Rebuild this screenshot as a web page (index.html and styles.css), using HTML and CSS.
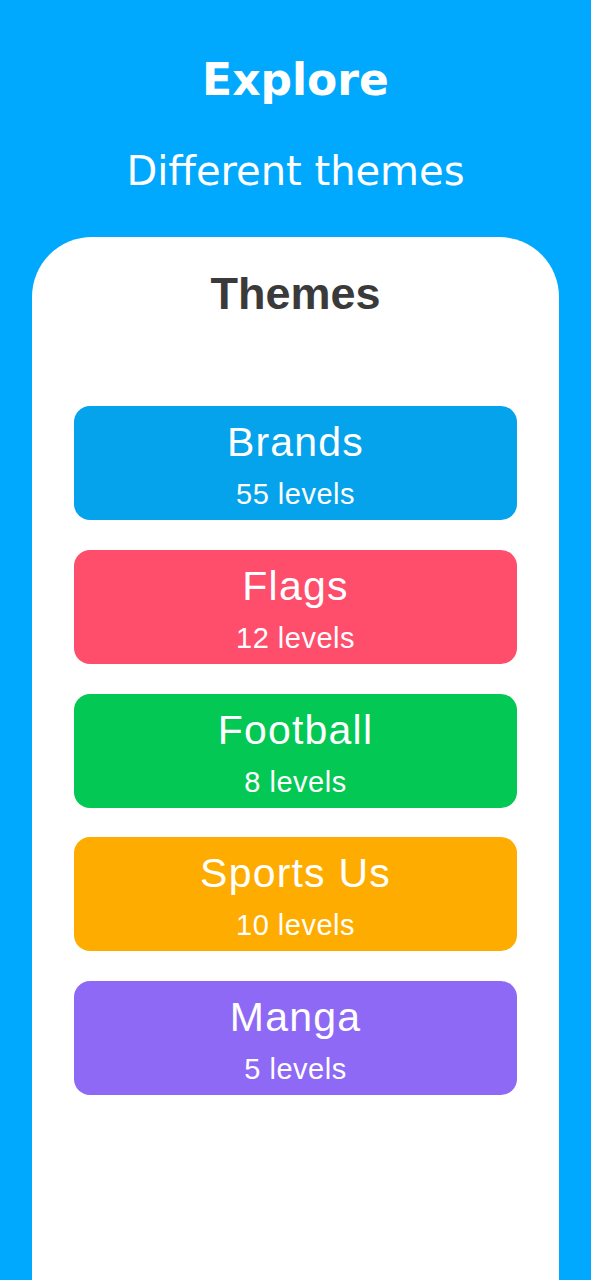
FILE: index.html
```html
<!DOCTYPE html>
<html lang="en">
<head>
<meta charset="utf-8">
<title>Explore themes</title>
<link rel="stylesheet" href="styles.css">
</head>
<body>
<div class="screen">
  <header class="hero">
    <h1 class="hero-title">Explore</h1>
    <p class="hero-sub">Different themes</p>
  </header>
  <main class="card">
    <h2 class="card-title">Themes</h2>
    <ul class="theme-list">
      <li class="theme theme-brands"><span class="theme-name">Brands</span><span class="theme-levels">55 levels</span></li>
      <li class="theme theme-flags"><span class="theme-name">Flags</span><span class="theme-levels">12 levels</span></li>
      <li class="theme theme-football"><span class="theme-name">Football</span><span class="theme-levels">8 levels</span></li>
      <li class="theme theme-sports"><span class="theme-name">Sports Us</span><span class="theme-levels">10 levels</span></li>
      <li class="theme theme-manga"><span class="theme-name">Manga</span><span class="theme-levels">5 levels</span></li>
    </ul>
  </main>
</div>
</body>
</html>
```

FILE: styles.css
```css
html, body {
  margin: 0;
  padding: 0;
  background: #00a9fe;
}

.screen {
  width: 591px;
  height: 1280px;
  overflow: hidden;
  display: flex;
  flex-direction: column;
  background: #00a9fe;
}

.hero {
  display: flex;
  flex-direction: column;
  align-items: center;
  padding-top: 52px;
  color: #ffffff;
  font-family: "DejaVu Sans", "Open Sans", sans-serif;
}

.hero-title {
  margin: 0;
  font-size: 44px;
  line-height: 56px;
  font-weight: 700;
}

.hero-sub {
  margin: 38px 0 0;
  font-size: 40px;
  line-height: 50px;
  font-weight: 400;
}

.card {
  flex: 1;
  margin: 41px 32px 0;
  background: #ffffff;
  border-radius: 60px 60px 0 0;
  display: flex;
  flex-direction: column;
  align-items: center;
  padding-top: 31px;
  font-family: "Liberation Sans", Arial, sans-serif;
}

.card-title {
  margin: 0;
  font-size: 45px;
  line-height: 52px;
  font-weight: 700;
  color: #3a3a3a;
}

.theme-list {
  list-style: none;
  margin: 86px 0 0;
  align-self: stretch;
  display: flex;
  flex-direction: column;
  gap: 29.75px;
  padding: 0 42px;
}

.theme {
  height: 114px;
  box-sizing: border-box;
  border-radius: 16px;
  display: flex;
  flex-direction: column;
  align-items: center;
  padding-top: 13px;
  color: #ffffff;
}

.theme-name {
  font-size: 41px;
  line-height: 46px;
  letter-spacing: 1.2px;
}

.theme-levels {
  margin-top: 6px;
  font-size: 29px;
  line-height: 46px;
  letter-spacing: 0.5px;
}

.theme-brands { background: #04a3eb; }
.theme-flags { background: #ff4d6c; }
.theme-football { background: #03c853; }
.theme-sports { background: #ffac00; }
.theme-manga { background: #8e69f6; }
```
